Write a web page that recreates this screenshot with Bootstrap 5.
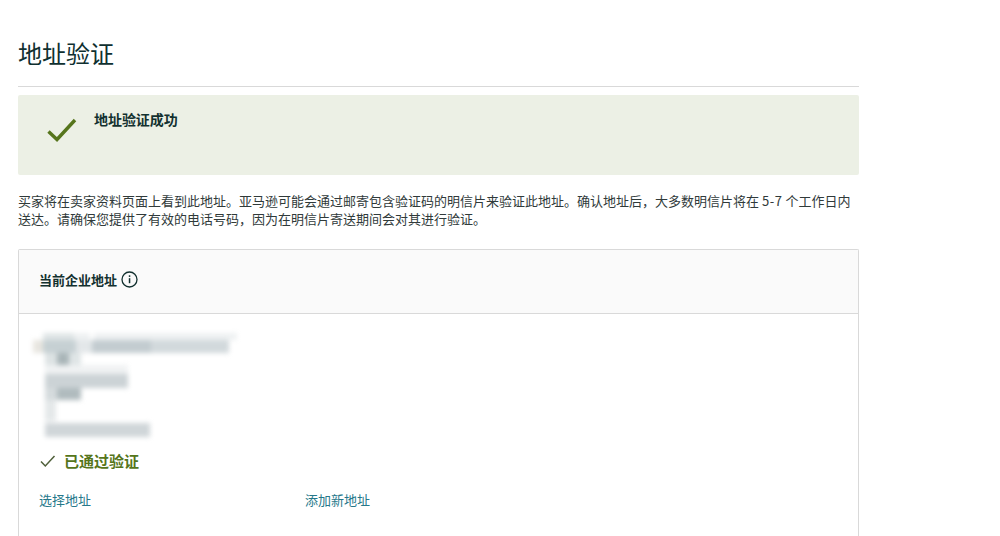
<!DOCTYPE html>
<html lang="zh-CN">
<head>
<meta charset="utf-8">
<title>地址验证</title>
<link href="https://cdn.jsdelivr.net/npm/bootstrap@5.3.0/dist/css/bootstrap.min.css" rel="stylesheet">
<style>
html,body{height:536px;overflow:hidden;background:#fff;}
body{font-family:"Noto Sans CJK SC","Liberation Sans",sans-serif;font-size:13px;color:#0f1111;}
.pg{width:841px;margin-left:18px;padding-top:38px;}
.ttl{font-size:24px;line-height:30px;font-weight:400;color:#0f3030;margin:0;padding-bottom:18px;border-bottom:1px solid #d9d9d9;}
.okbox{height:80px;margin-top:8px;background:#ecf0e5;border-radius:2px;padding:13px 28px;gap:16px;}
.okbox svg{margin-top:9px;flex:none;}
.oktxt{font-size:14px;line-height:22px;font-weight:700;color:#12302f;letter-spacing:-.05px;}
.desc{margin:17px 0 21px;line-height:18px;color:#303a3a;}
.numtxt{letter-spacing:.6px;}
.addr{border:1px solid #d9d9d9;border-bottom:0;border-radius:2px 2px 0 0;height:300px;}
.addr-h{height:64px;background:#fafafa;border-bottom:1px solid #d9d9d9;padding:0 20px 4px;gap:4px;font-weight:700;color:#12302f;}
.addr-b{padding:19px 20px 0;}
.mosaic{width:204px;height:105px;margin-left:-6px;filter:blur(2.5px);}
.m1{height:20px;padding-top:7px;background:linear-gradient(90deg,#fff 0 5%,#dfe5e6 5% 20%,#eef1f2 20% 28%,#fff 28% 30%,#eef1f2 30%);background-size:100% 7px;background-repeat:no-repeat;}
.m1i{height:13px;width:196px;background:linear-gradient(90deg,#e8e6e0 0 5%,#c6d0d3 5% 22%,#e3e7e9 22% 30%,#c3ccd0 30% 60%,#d2d9dc 60% 100%);}
.m2{height:12px;width:48px;background:linear-gradient(90deg,#fff 0 26%,#dde3e4 26% 50%,#a9b5b8 50% 75%,#dfe5e6 75%);}
.m3{height:23px;width:95px;background:linear-gradient(90deg,#fff 0 13%,transparent 13%),linear-gradient(180deg,#f0f2f3 0 40%,#ccd3d6 40%);}
.m4{height:12px;width:48px;background:linear-gradient(90deg,#fff 0 26%,#d5dbdd 26% 50%,#b0bbbe 50%);}
.m5{height:21px;width:23px;background:linear-gradient(90deg,#fff 0 52%,#e4e8e9 52%);}
.m6{height:14px;width:117px;margin-top:2px;background:linear-gradient(90deg,#fff 0 10%,#d0d6d9 10%);}
.vrf{margin-top:12px;gap:8px;font-size:15px;line-height:22px;font-weight:700;color:#55751b;}
.lnks{margin-top:18px;line-height:19px;}
.lnks a{color:#26788a;text-decoration:none;}
.lnkcol{width:266px;}
</style>
</head>
<body>
<main class="pg">
  <h1 class="ttl">地址验证</h1>
  <div class="okbox d-flex align-items-start">
    <svg width="32" height="26" viewBox="0 0 32 26" fill="none"><path d="M2.5 14.5 L11 22.5 L29 3" stroke="#56751c" stroke-width="3.4"/></svg>
    <div class="oktxt">地址验证成功</div>
  </div>
  <p class="desc">买家将在卖家资料页面上看到此地址。亚马逊可能会通过邮寄包含验证码的明信片来验证此地址。确认地址后，大多数明信片将在 <span class="numtxt">5-7</span> 个工作日内送达。请确保您提供了有效的电话号码，因为在明信片寄送期间会对其进行验证。</p>
  <section class="addr">
    <div class="addr-h d-flex align-items-center">
      <span>当前企业地址</span>
      <svg width="17" height="17" viewBox="0 0 17 17" fill="none"><circle cx="8.5" cy="8.5" r="7.5" stroke="#12302f" stroke-width="1.3"/><rect x="7.8" y="7.2" width="1.5" height="5" fill="#12302f"/><rect x="7.8" y="4.3" width="1.5" height="1.6" fill="#12302f"/></svg>
    </div>
    <div class="addr-b">
      <div class="mosaic">
        <div class="m1"><div class="m1i"></div></div>
        <div class="m2"></div>
        <div class="m3"></div>
        <div class="m4"></div>
        <div class="m5"></div>
        <div class="m6"></div>
      </div>
      <div class="vrf d-flex align-items-center">
        <svg width="17" height="14" viewBox="0 0 17 14" fill="none"><path d="M2 7.5 L6.3 12 L15.5 2" stroke="#4f5f3a" stroke-width="1.5"/></svg>
        <span>已通过验证</span>
      </div>
      <div class="lnks d-flex">
        <div class="lnkcol"><a href="#">选择地址</a></div>
        <div><a href="#">添加新地址</a></div>
      </div>
    </div>
  </section>
</main>
<script src="https://cdn.jsdelivr.net/npm/bootstrap@5.3.0/dist/js/bootstrap.bundle.min.js"></script>
</body>
</html>
